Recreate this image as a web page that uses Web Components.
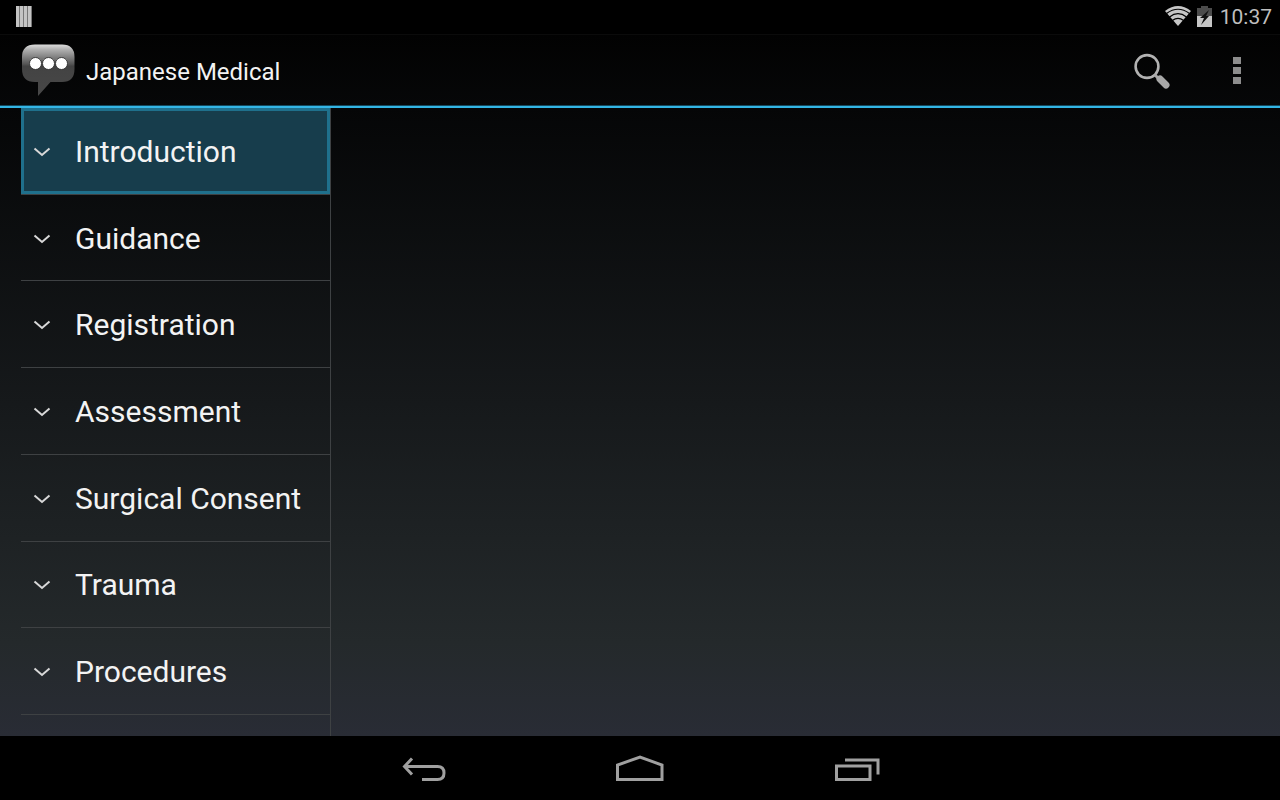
<!DOCTYPE html>
<html lang="en">
<head>
<meta charset="utf-8">
<meta name="viewport" content="width=device-width, initial-scale=1">
<title>Japanese Medical</title>
<style>
  html, body {
    height: 100%;
    margin: 0;
  }

  body {
    background: #000;
    color: #f3f3f3;
    font-family: Roboto, "Open Sans", sans-serif;
  }
</style>
</head>
<body>
<phrase-app></phrase-app>

<script>
class StatusBar extends HTMLElement {
  constructor() {
    super();
    this.attachShadow({ mode: 'open' });
  }

  connectedCallback() {
    this.shadowRoot.innerHTML = `
      <style>
        :host {
          display: flex;
          align-items: center;
          justify-content: space-between;
          height: 34px;
          padding: 0 8px 0 16px;
          box-sizing: border-box;
          background: #000;
          color: #bebebe;
        }

        .status {
          display: flex;
          align-items: center;
          gap: 6px;
        }

        time {
          font-size: 21px;
          line-height: 34px;
          margin-left: 2px;
        }

        svg { display: block; }
      </style>
      <svg width="16" height="22" viewBox="0 0 16 22" aria-hidden="true">
        <path d="M0 0h16v21H0z" fill="#777"/>
        <path d="M0 0h3v21H0zM4 0h3v21H4zM8 0h3v21H8zM12 0h3v21h-3z" fill="#c4c4c4"/>
      </svg>
      <div class="status">
        <svg width="26" height="22" viewBox="0 0 26 22" role="img" aria-label="Wi-Fi">
          <path d="M0 5Q13 -5 26 5L13 20z" fill="#c6c6c6"/>
          <path d="M1.500 7.500Q13 -1 24.500 7.500M4.500 11Q13 4.400 21.500 11M7.400 14.500Q13 10.400 18.600 14.500" fill="none" stroke="#000" stroke-width="1.200"/>
        </svg>
        <svg width="15" height="22" viewBox="0 0 15 22" role="img" aria-label="Battery charging">
          <path d="M4 0h7v2h4v8H0V2h4z" fill="#4c4c4c"/>
          <path d="M0 10h15v11H0z" fill="#c6c6c6"/>
          <path d="M12 4L3 12h4l-3 7L12 10H9z" fill="#111"/>
        </svg>
        <time>10:37</time>
      </div>
    `;
  }
}

class ActionBar extends HTMLElement {
  constructor() {
    super();
    this.attachShadow({ mode: 'open' });
  }

  connectedCallback() {
    this.shadowRoot.innerHTML = `
      <style>
        :host {
          display: flex;
          align-items: center;
          height: 74px;
          padding: 0 10px 0 20px;
          box-sizing: border-box;
          border-top: 1px solid #0b0b0b;
          border-bottom: 2px solid #33b5e5;
          background: linear-gradient(#020202, #060708);
          box-shadow: inset 0 -1px #14495d;
        }

        h1 {
          flex: 1;
          margin: 0 0 0 10px;
          padding-top: 2px;
          font-size: 24px;
          font-weight: 400;
          line-height: 32px;
        }

        button {
          display: flex;
          align-items: center;
          justify-content: center;
          height: 64px;
          padding: 0;
          border: 0;
          background: none;
        }

        .search { width: 84px; }
        .more { width: 66px; margin-left: 10px; }
      </style>
      <svg width="56" height="56" viewBox="0 0 56 56" aria-hidden="true">
        <defs>
          <linearGradient id="bubble" x1="0" y1="0" x2="0" y2="1">
            <stop offset="0" stop-color="#dcdcdc"/>
            <stop offset=".1" stop-color="#b0b0b0"/>
            <stop offset=".38" stop-color="#555"/>
            <stop offset=".42" stop-color="#434343"/>
            <stop offset="1" stop-color="#484848"/>
          </linearGradient>
        </defs>
        <path d="M15 1.500H42Q54.500 1.500 54.500 14V26Q54.500 39 42 39H30.500L18 53V39H15Q2 39 2 26V14Q2 1.500 15 1.500z" fill="url(#bubble)"/>
        <g fill="#fff" stroke="#222" stroke-width=".8">
          <circle cx="15.500" cy="20.500" r="6"/>
          <circle cx="28.500" cy="20.500" r="6"/>
          <circle cx="41.500" cy="20.500" r="6"/>
        </g>
      </svg>
      <h1><slot></slot></h1>
      <button class="search" type="button" aria-label="Search">
        <svg width="36" height="36" viewBox="0 0 36 36">
          <circle cx="13" cy="13.500" r="11.400" fill="none" stroke="#b2b2b2" stroke-width="2.600"/>
          <path d="M20.500 21.500l4 4" stroke="#a8a8a8" stroke-width="3"/>
          <path d="M26 26l6 6" stroke="#a8a8a8" stroke-width="7" stroke-linecap="round"/>
        </svg>
      </button>
      <button class="more" type="button" aria-label="More options">
        <svg width="8" height="28" viewBox="0 0 8 28">
          <path d="M0 0h8v7H0zM0 10h8v7H0zM0 20h8v7H0z" fill="#8d8d8d"/>
        </svg>
      </button>
    `;
  }
}

class CategoryItem extends HTMLElement {
  constructor() {
    super();
    this.attachShadow({ mode: 'open' });
  }

  connectedCallback() {
    this.shadowRoot.innerHTML = `
      <style>
        :host {
          display: flex;
          border-bottom: 1px solid #3e4143;
        }

        button {
          flex: 1;
          display: flex;
          align-items: center;
          gap: 24px;
          padding: 2px 8px 0 12px;
          border: 0;
          background: none;
          color: inherit;
          font: inherit;
          font-size: 30px;
          line-height: 36px;
          text-align: left;
          white-space: nowrap;
        }

        :host([selected]) button {
          background: #173d4c;
          box-shadow: inset 0 0 0 3px #1f708c;
        }

        svg { flex: none; }
      </style>
      <button type="button" aria-expanded="false">
        <svg width="18" height="12" viewBox="0 0 18 12" aria-hidden="true">
          <path d="M1.500 2.500L9 9l7.500-6.500" fill="none" stroke="#d8d8d8" stroke-width="2"/>
        </svg>
        <span><slot></slot></span>
      </button>
    `;
  }
}

class CategoryList extends HTMLElement {
  constructor() {
    super();
    this.attachShadow({ mode: 'open' });
  }

  connectedCallback() {
    this.shadowRoot.innerHTML = `
      <style>
        :host {
          display: grid;
          grid-auto-rows: minmax(64px, 1fr);
          box-sizing: border-box;
          min-width: 310px;
          padding-bottom: 21px;
          border-right: 1px solid #3e4143;
        }
      </style>
      <slot></slot>
    `;
  }
}

class NavBar extends HTMLElement {
  constructor() {
    super();
    this.attachShadow({ mode: 'open' });
  }

  connectedCallback() {
    this.shadowRoot.innerHTML = `
      <style>
        :host {
          display: flex;
          justify-content: center;
          height: 64px;
          background: #000;
        }

        button {
          width: 216px;
          padding: 0;
          border: 0;
          background: none;
        }

        svg {
          display: block;
          margin: 2px auto 0;
          fill: none;
          stroke: #a0a0a0;
          stroke-width: 3;
        }
      </style>
      <button type="button" aria-label="Back">
        <svg width="48" height="32" viewBox="0 0 48 32">
          <path d="M4 13.500H37.500Q44 13.500 44 20T37.500 26.500H22M12 5.500L4.500 13.500L12 21.500"/>
        </svg>
      </button>
      <button type="button" aria-label="Home">
        <svg width="48" height="32" viewBox="0 0 48 32">
          <path d="M1.500 26.500V12L24 4L46 12V26.500z"/>
        </svg>
      </button>
      <button type="button" aria-label="Recent apps">
        <svg width="48" height="32" viewBox="0 0 48 32">
          <path d="M4.500 13H38V26.500H4.500zM13 7H46V21.500"/>
        </svg>
      </button>
    `;
  }
}

class PhraseApp extends HTMLElement {
  constructor() {
    super();
    this.attachShadow({ mode: 'open' });
  }

  connectedCallback() {
    const categories = [
      'Introduction',
      'Guidance',
      'Registration',
      'Assessment',
      'Surgical Consent',
      'Trauma',
      'Procedures'
    ];

    this.shadowRoot.innerHTML = `
      <style>
        :host {
          display: flex;
          flex-direction: column;
          min-height: 100%;
        }

        main {
          flex: 1;
          display: flex;
          padding-left: 21px;
          background: linear-gradient(#050607, #16191b 47%, #24292b 85%, #292c35);
        }

        section { flex: 1; }
      </style>
      <status-bar></status-bar>
      <action-bar>Japanese Medical</action-bar>
      <main>
        <category-list>
          ${categories.map((name, i) => `<category-item${i === 0 ? ' selected' : ''}>${name}</category-item>`).join('')}
        </category-list>
        <section aria-label="Phrases"></section>
      </main>
      <nav-bar></nav-bar>
    `;
  }
}

customElements.define('status-bar', StatusBar);
customElements.define('action-bar', ActionBar);
customElements.define('category-item', CategoryItem);
customElements.define('category-list', CategoryList);
customElements.define('nav-bar', NavBar);
customElements.define('phrase-app', PhraseApp);
</script>
</body>
</html>
